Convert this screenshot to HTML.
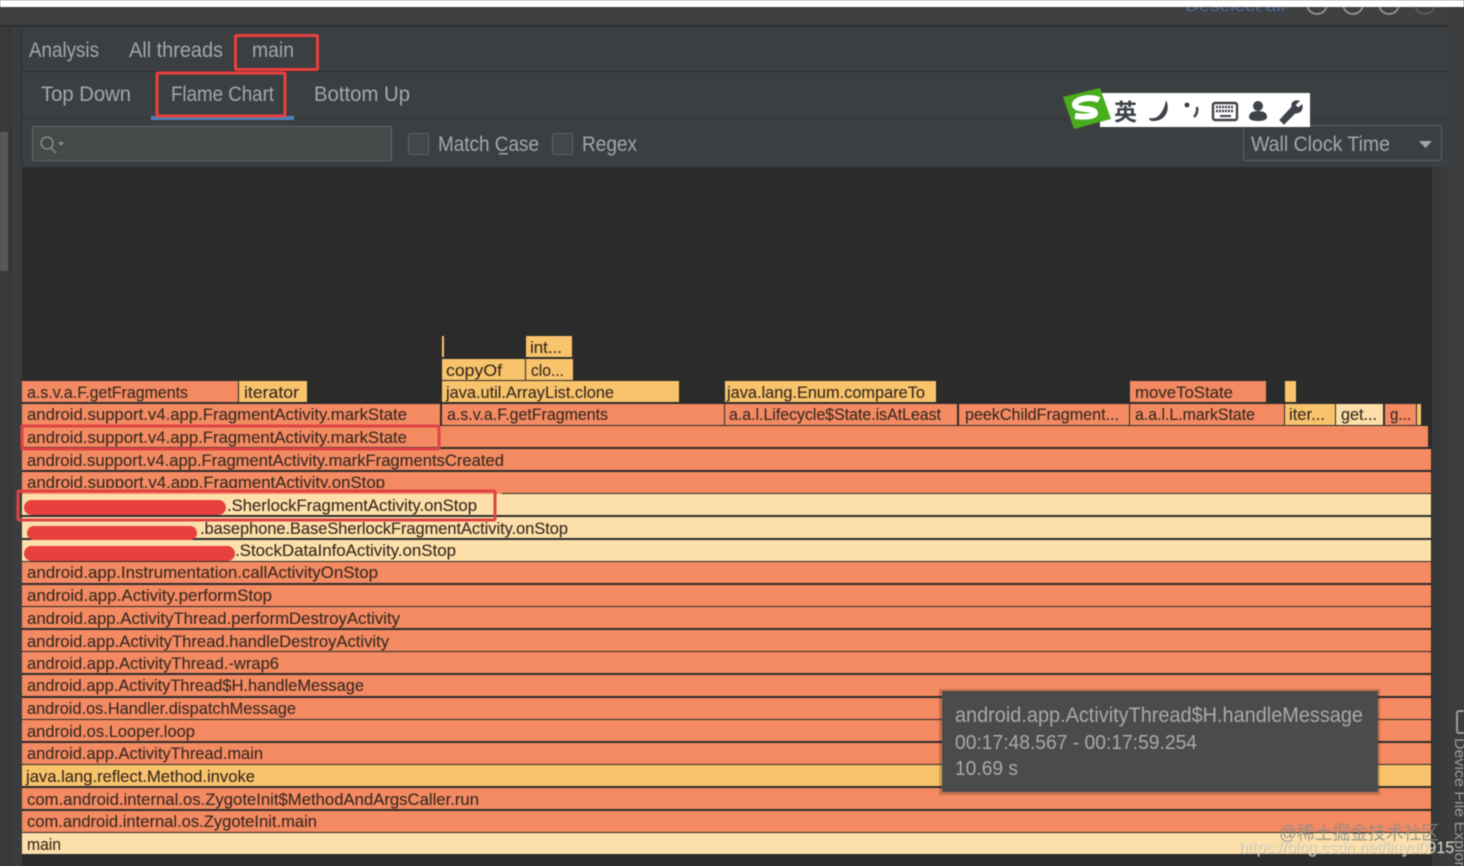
<!DOCTYPE html>
<html><head><meta charset="utf-8"><style>
html,body{margin:0;padding:0;background:#3c3f41;width:1464px;height:866px;overflow:hidden}
svg{display:block;filter:blur(.6px)}
text{font-family:"Liberation Sans","Noto Sans CJK SC",sans-serif}
.b text{font-size:16.5px;fill:#3a2a20;stroke:#3a2a20;stroke-width:.12px}
.u{font-size:21px;fill:#a4a7a9}
</style></head><body>
<svg width="1464" height="866" viewBox="0 0 1464 866" xmlns="http://www.w3.org/2000/svg">
<rect width="1464" height="866" fill="#3c3f41"/>
<rect x="0" y="7" width="1448" height="18" fill="#3e4042"/>
<rect x="0" y="25" width="1448" height="2" fill="#2c2d2e"/>
<rect x="0" y="27" width="9" height="839" fill="#37393b"/>
<rect x="0" y="132" width="8" height="139" fill="#56585a"/>
<rect x="9" y="27" width="3" height="839" fill="#333537"/>
<rect x="12" y="27" width="9" height="839" fill="#3a3c3e"/>
<rect x="21" y="71" width="1427" height="1" fill="#2d2e2f"/>
<rect x="21" y="118" width="1427" height="1" fill="#333435"/>
<rect x="1448" y="7" width="16" height="859" fill="#3a3c3e"/>
<rect x="21" y="27" width="1" height="140" fill="#2e3031"/>

<!-- header icons -->
<text x="1185" y="11" font-size="15" fill="#4d6c9c" textLength="100" lengthAdjust="spacingAndGlyphs">Deselect all</text>
<g fill="none" stroke="#9b9d9f" stroke-width="1.6"><circle cx="1317" cy="4" r="10"/><circle cx="1353" cy="4" r="10"/><circle cx="1389" cy="4" r="10"/><circle cx="1425" cy="4" r="10" stroke="#5c5e60"/></g>
<rect x="0" y="0" width="1464" height="7" fill="#fff"/>

<!-- tabs -->
<text class="u" x="29" y="57" textLength="70" lengthAdjust="spacingAndGlyphs">Analysis</text>
<text class="u" x="129" y="57" textLength="94" lengthAdjust="spacingAndGlyphs">All threads</text>
<text class="u" x="252" y="57" textLength="42" lengthAdjust="spacingAndGlyphs">main</text>
<text class="u" x="41" y="101" textLength="90" lengthAdjust="spacingAndGlyphs">Top Down</text>
<text class="u" x="171" y="101" textLength="103" lengthAdjust="spacingAndGlyphs">Flame Chart</text>
<text class="u" x="314" y="101" textLength="96" lengthAdjust="spacingAndGlyphs">Bottom Up</text>
<rect x="151" y="116" width="143" height="4" fill="#4c7fbf"/>
<rect x="235.500" y="35.500" width="82" height="34" rx="1" fill="none" stroke="#e8403f" stroke-width="3"/>
<rect x="157" y="73" width="128" height="43" rx="1" fill="none" stroke="#e8403f" stroke-width="3"/>

<!-- search row -->
<rect x="32.500" y="126.500" width="359" height="34" rx="2" fill="#45494a" stroke="#626567"/>
<circle cx="47" cy="143" r="6" fill="none" stroke="#888b8d" stroke-width="1.500"/>
<path d="M51 148l5 5" stroke="#888b8d" stroke-width="1.500"/>
<path d="M58 142h6l-3 4z" fill="#888b8d"/>
<rect x="408.500" y="133.500" width="20" height="21" rx="2" fill="#43474a" stroke="#5e6163"/>
<text class="u" x="438" y="151" textLength="101" lengthAdjust="spacingAndGlyphs">Match Case</text>
<rect x="499" y="153" width="9" height="1.500" fill="#a4a7a9"/>
<rect x="552.500" y="133.500" width="20" height="21" rx="2" fill="#43474a" stroke="#5e6163"/>
<text class="u" x="582" y="151" textLength="55" lengthAdjust="spacingAndGlyphs">Regex</text>
<rect x="1243.500" y="125.500" width="198" height="35" rx="2" fill="#3c3f41" stroke="#626567"/>
<text class="u" x="1251" y="151" textLength="139" lengthAdjust="spacingAndGlyphs">Wall Clock Time</text>
<path d="M1419 141h13l-6.500 7z" fill="#a4a7a9"/>

<!-- IME bar -->
<rect x="1100" y="93" width="210" height="34" fill="#fff"/>
<path d="M1063 97l37-9 11 31-37 10z" fill="#49ad1e"/>
<path d="M1099 100c-8-4-25-1-24 5c1 6 19 2 20 8c0 4-12 4-20 3" fill="none" stroke="#fff" stroke-width="6"/>
<text x="1114" y="120" font-size="23" font-weight="700" fill="#3e4249" style="font-family:'Noto Sans CJK SC',sans-serif">英</text>
<path d="M1166 100c5 10-1 22-14 21c-2 0-3-2-3-3c6 1 9-1 12-5c3-4 4-8 5-13z" fill="#3e4249"/>
<circle cx="1187" cy="105" r="2.500" fill="#3e4249"/><path d="M1197 107c1 5-1 8-3 10" fill="none" stroke="#3e4249" stroke-width="2.500"/>
<rect x="1213" y="103" width="24" height="17" rx="2" fill="#fff" stroke="#3e4249" stroke-width="2.400"/>
<path d="M1216 107h18M1216 111h18" stroke="#3e4249" stroke-width="2.500" stroke-dasharray="2 1"/><path d="M1220 116h11" stroke="#3e4249" stroke-width="2"/>
<circle cx="1258" cy="106" r="5" fill="#3e4249"/><path d="M1249 117c0-4 3-6 9-6s9 2 9 6c0 3-4 4-9 4s-9-1-9-4z" fill="#3e4249"/>
<path d="M1280 120l12-13c-1-4 2-7 7-6l-4 4 3 3 4-3c1 5-2 8-7 8l-11 11z" fill="#3e4249" stroke="#3e4249"/>

<!-- chart -->
<rect x="22" y="167" width="1410" height="699" fill="#2b2b2b"/>
<rect x="1432" y="167" width="16" height="699" fill="#37393b"/>

<g id="bars">
<rect x="442" y="336" width="2" height="21" fill="#f8c36b"/>
<rect x="526" y="336" width="46" height="21" fill="#f8c36b"/>
<rect x="442" y="359" width="83" height="21" fill="#f8c36b"/>
<rect x="526" y="359" width="47" height="21" fill="#f8c36b"/>

<rect x="22" y="381" width="216" height="21" fill="#f38a62"/>
<rect x="239" y="381" width="68" height="21" fill="#f8c36b"/>
<rect x="442" y="381" width="237" height="21" fill="#f8c36b"/>
<rect x="725" y="381" width="211" height="21" fill="#f8c36b"/>
<rect x="1130" y="381" width="136" height="21" fill="#f38a62"/>
<rect x="1285" y="381" width="11" height="21" fill="#f8c36b"/>

<rect x="22" y="404" width="418" height="21" fill="#f38a62"/>
<rect x="442" y="404" width="282" height="21" fill="#f38a62"/>
<rect x="725" y="404" width="232" height="21" fill="#f38a62"/>
<rect x="959" y="404" width="170" height="21" fill="#f38a62"/>
<rect x="1130" y="404" width="154" height="21" fill="#f38a62"/>
<rect x="1285" y="404" width="50" height="21" fill="#f8c36b"/>
<rect x="1336" y="404" width="47" height="21" fill="#fcdfa9"/>
<rect x="1385" y="404" width="31" height="21" fill="#f38a62"/>
<rect x="1417" y="404" width="4" height="21" fill="#f8c36b"/>

<rect x="22" y="426" width="1406" height="21" fill="#f38a62"/>
<rect x="22" y="449" width="1409" height="21" fill="#f38a62"/>
<rect x="22" y="472" width="1409" height="21" fill="#f38a62"/>
<rect x="22" y="494" width="1409" height="21" fill="#fcdfa9"/>
<rect x="22" y="517" width="1409" height="21" fill="#fcdfa9"/>
<rect x="22" y="540" width="1409" height="21" fill="#fcdfa9"/>
<rect x="22" y="562" width="1409" height="21" fill="#f38a62"/>
<rect x="22" y="585" width="1409" height="21" fill="#f38a62"/>
<rect x="22" y="607" width="1409" height="21" fill="#f38a62"/>
<rect x="22" y="630" width="1409" height="21" fill="#f38a62"/>
<rect x="22" y="652" width="1409" height="21" fill="#f38a62"/>
<rect x="22" y="675" width="1409" height="21" fill="#f38a62"/>
<rect x="22" y="698" width="1409" height="21" fill="#f38a62"/>
<rect x="22" y="720" width="1409" height="21" fill="#f38a62"/>
<rect x="22" y="743" width="1409" height="21" fill="#f38a62"/>
<rect x="22" y="765" width="1409" height="21" fill="#f8c36b"/>
<rect x="22" y="788" width="1409" height="21" fill="#f38a62"/>
<rect x="22" y="811" width="1409" height="21" fill="#f38a62"/>
<rect x="22" y="833" width="1409" height="21" fill="#fcdfa9"/>
</g>

<g class="b">
<text x="530" y="353" textLength="32" lengthAdjust="spacingAndGlyphs">int...</text>
<text x="446" y="376" textLength="56" lengthAdjust="spacingAndGlyphs">copyOf</text>
<text x="531" y="376" textLength="33" lengthAdjust="spacingAndGlyphs">clo...</text>
<text x="27" y="398" textLength="161" lengthAdjust="spacingAndGlyphs">a.s.v.a.F.getFragments</text>
<text x="244" y="398" textLength="55" lengthAdjust="spacingAndGlyphs">iterator</text>
<text x="446" y="398" textLength="168" lengthAdjust="spacingAndGlyphs">java.util.ArrayList.clone</text>
<text x="727" y="398" textLength="198" lengthAdjust="spacingAndGlyphs">java.lang.Enum.compareTo</text>
<text x="1135" y="398" textLength="98" lengthAdjust="spacingAndGlyphs">moveToState</text>
<text x="27" y="420" textLength="380" lengthAdjust="spacingAndGlyphs">android.support.v4.app.FragmentActivity.markState</text>
<text x="447" y="420" textLength="161" lengthAdjust="spacingAndGlyphs">a.s.v.a.F.getFragments</text>
<text x="729" y="420" textLength="212" lengthAdjust="spacingAndGlyphs">a.a.l.Lifecycle$State.isAtLeast</text>
<text x="965" y="420" textLength="154" lengthAdjust="spacingAndGlyphs">peekChildFragment...</text>
<text x="1135" y="420" textLength="120" lengthAdjust="spacingAndGlyphs">a.a.l.L.markState</text>
<text x="1289" y="420" textLength="36" lengthAdjust="spacingAndGlyphs">iter...</text>
<text x="1341" y="420" textLength="36" lengthAdjust="spacingAndGlyphs">get...</text>
<text x="1390" y="420" textLength="21" lengthAdjust="spacingAndGlyphs">g...</text>
<text x="27" y="443" textLength="380" lengthAdjust="spacingAndGlyphs">android.support.v4.app.FragmentActivity.markState</text>
<text x="27" y="466" textLength="477" lengthAdjust="spacingAndGlyphs">android.support.v4.app.FragmentActivity.markFragmentsCreated</text>
<text x="27" y="488" textLength="358" lengthAdjust="spacingAndGlyphs">android.support.v4.app.FragmentActivity.onStop</text>
<text x="227" y="511" textLength="250" lengthAdjust="spacingAndGlyphs">.SherlockFragmentActivity.onStop</text>
<text x="200" y="534" textLength="368" lengthAdjust="spacingAndGlyphs">.basephone.BaseSherlockFragmentActivity.onStop</text>
<text x="235" y="556" textLength="221" lengthAdjust="spacingAndGlyphs">.StockDataInfoActivity.onStop</text>
<text x="27" y="578" textLength="351" lengthAdjust="spacingAndGlyphs">android.app.Instrumentation.callActivityOnStop</text>
<text x="27" y="601" textLength="245" lengthAdjust="spacingAndGlyphs">android.app.Activity.performStop</text>
<text x="27" y="624" textLength="373" lengthAdjust="spacingAndGlyphs">android.app.ActivityThread.performDestroyActivity</text>
<text x="27" y="647" textLength="362" lengthAdjust="spacingAndGlyphs">android.app.ActivityThread.handleDestroyActivity</text>
<text x="27" y="669" textLength="252" lengthAdjust="spacingAndGlyphs">android.app.ActivityThread.-wrap6</text>
<text x="27" y="691" textLength="337" lengthAdjust="spacingAndGlyphs">android.app.ActivityThread$H.handleMessage</text>
<text x="27" y="714" textLength="269" lengthAdjust="spacingAndGlyphs">android.os.Handler.dispatchMessage</text>
<text x="27" y="737" textLength="168" lengthAdjust="spacingAndGlyphs">android.os.Looper.loop</text>
<text x="27" y="759" textLength="236" lengthAdjust="spacingAndGlyphs">android.app.ActivityThread.main</text>
<text x="26" y="782" textLength="229" lengthAdjust="spacingAndGlyphs">java.lang.reflect.Method.invoke</text>
<text x="27" y="805" textLength="452" lengthAdjust="spacingAndGlyphs">com.android.internal.os.ZygoteInit$MethodAndArgsCaller.run</text>
<text x="27" y="827" textLength="290" lengthAdjust="spacingAndGlyphs">com.android.internal.os.ZygoteInit.main</text>
<text x="27" y="850" textLength="34" lengthAdjust="spacingAndGlyphs">main</text>
</g>

<!-- row cover for clipped text -->
<rect x="22" y="488" width="480" height="6" fill="#f38a62"/>
<!-- redactions -->
<rect x="24" y="500" width="202" height="15" rx="7.500" fill="#e8403f"/>
<rect x="27" y="526" width="170" height="14" rx="7" fill="#e8403f"/>
<rect x="24" y="546" width="211" height="15" rx="7.500" fill="#e8403f"/>
<!-- highlight boxes -->
<rect x="22" y="426" width="417" height="23" rx="1" fill="none" stroke="#de4344" stroke-width="3"/>
<rect x="18" y="491" width="477" height="29" rx="1" fill="none" stroke="#de4344" stroke-width="3"/>

<!-- tooltip -->
<rect x="939" y="689" width="441" height="106" fill="#000" opacity=".18"/>
<rect x="942" y="691" width="436" height="101" fill="#4a4c4c"/>
<text x="955" y="722" font-size="21" fill="#a8aaaa" textLength="408" lengthAdjust="spacingAndGlyphs">android.app.ActivityThread$H.handleMessage</text>
<text x="955" y="749" font-size="20" fill="#a8aaaa" textLength="242" lengthAdjust="spacingAndGlyphs">00:17:48.567 - 00:17:59.254</text>
<text x="955" y="775" font-size="20" fill="#a8aaaa" textLength="63" lengthAdjust="spacingAndGlyphs">10.69 s</text>

<!-- side label -->
<rect x="1457" y="711" width="10" height="22" rx="2" fill="none" stroke="#9a9c9e" stroke-width="2"/>
<text transform="translate(1455,738) rotate(90)" font-size="15" fill="#9a9c9e" textLength="143" lengthAdjust="spacingAndGlyphs">Device File Explorer</text>

<!-- watermark -->
<text x="1279" y="839" font-size="19" fill="#8d8d8a" opacity=".85" textLength="160" lengthAdjust="spacingAndGlyphs">@稀土掘金技术社区</text>
<text x="1240" y="854" font-size="17" fill="#8a8a86" opacity=".35" textLength="215" lengthAdjust="spacingAndGlyphs">https://blog.csdn.net/liuyu0915</text>
<text x="1239" y="853" font-size="17" fill="#e9e2cf" opacity=".9" textLength="215" lengthAdjust="spacingAndGlyphs">https://blog.csdn.net/liuyu0915</text>
</svg>
</body></html>
